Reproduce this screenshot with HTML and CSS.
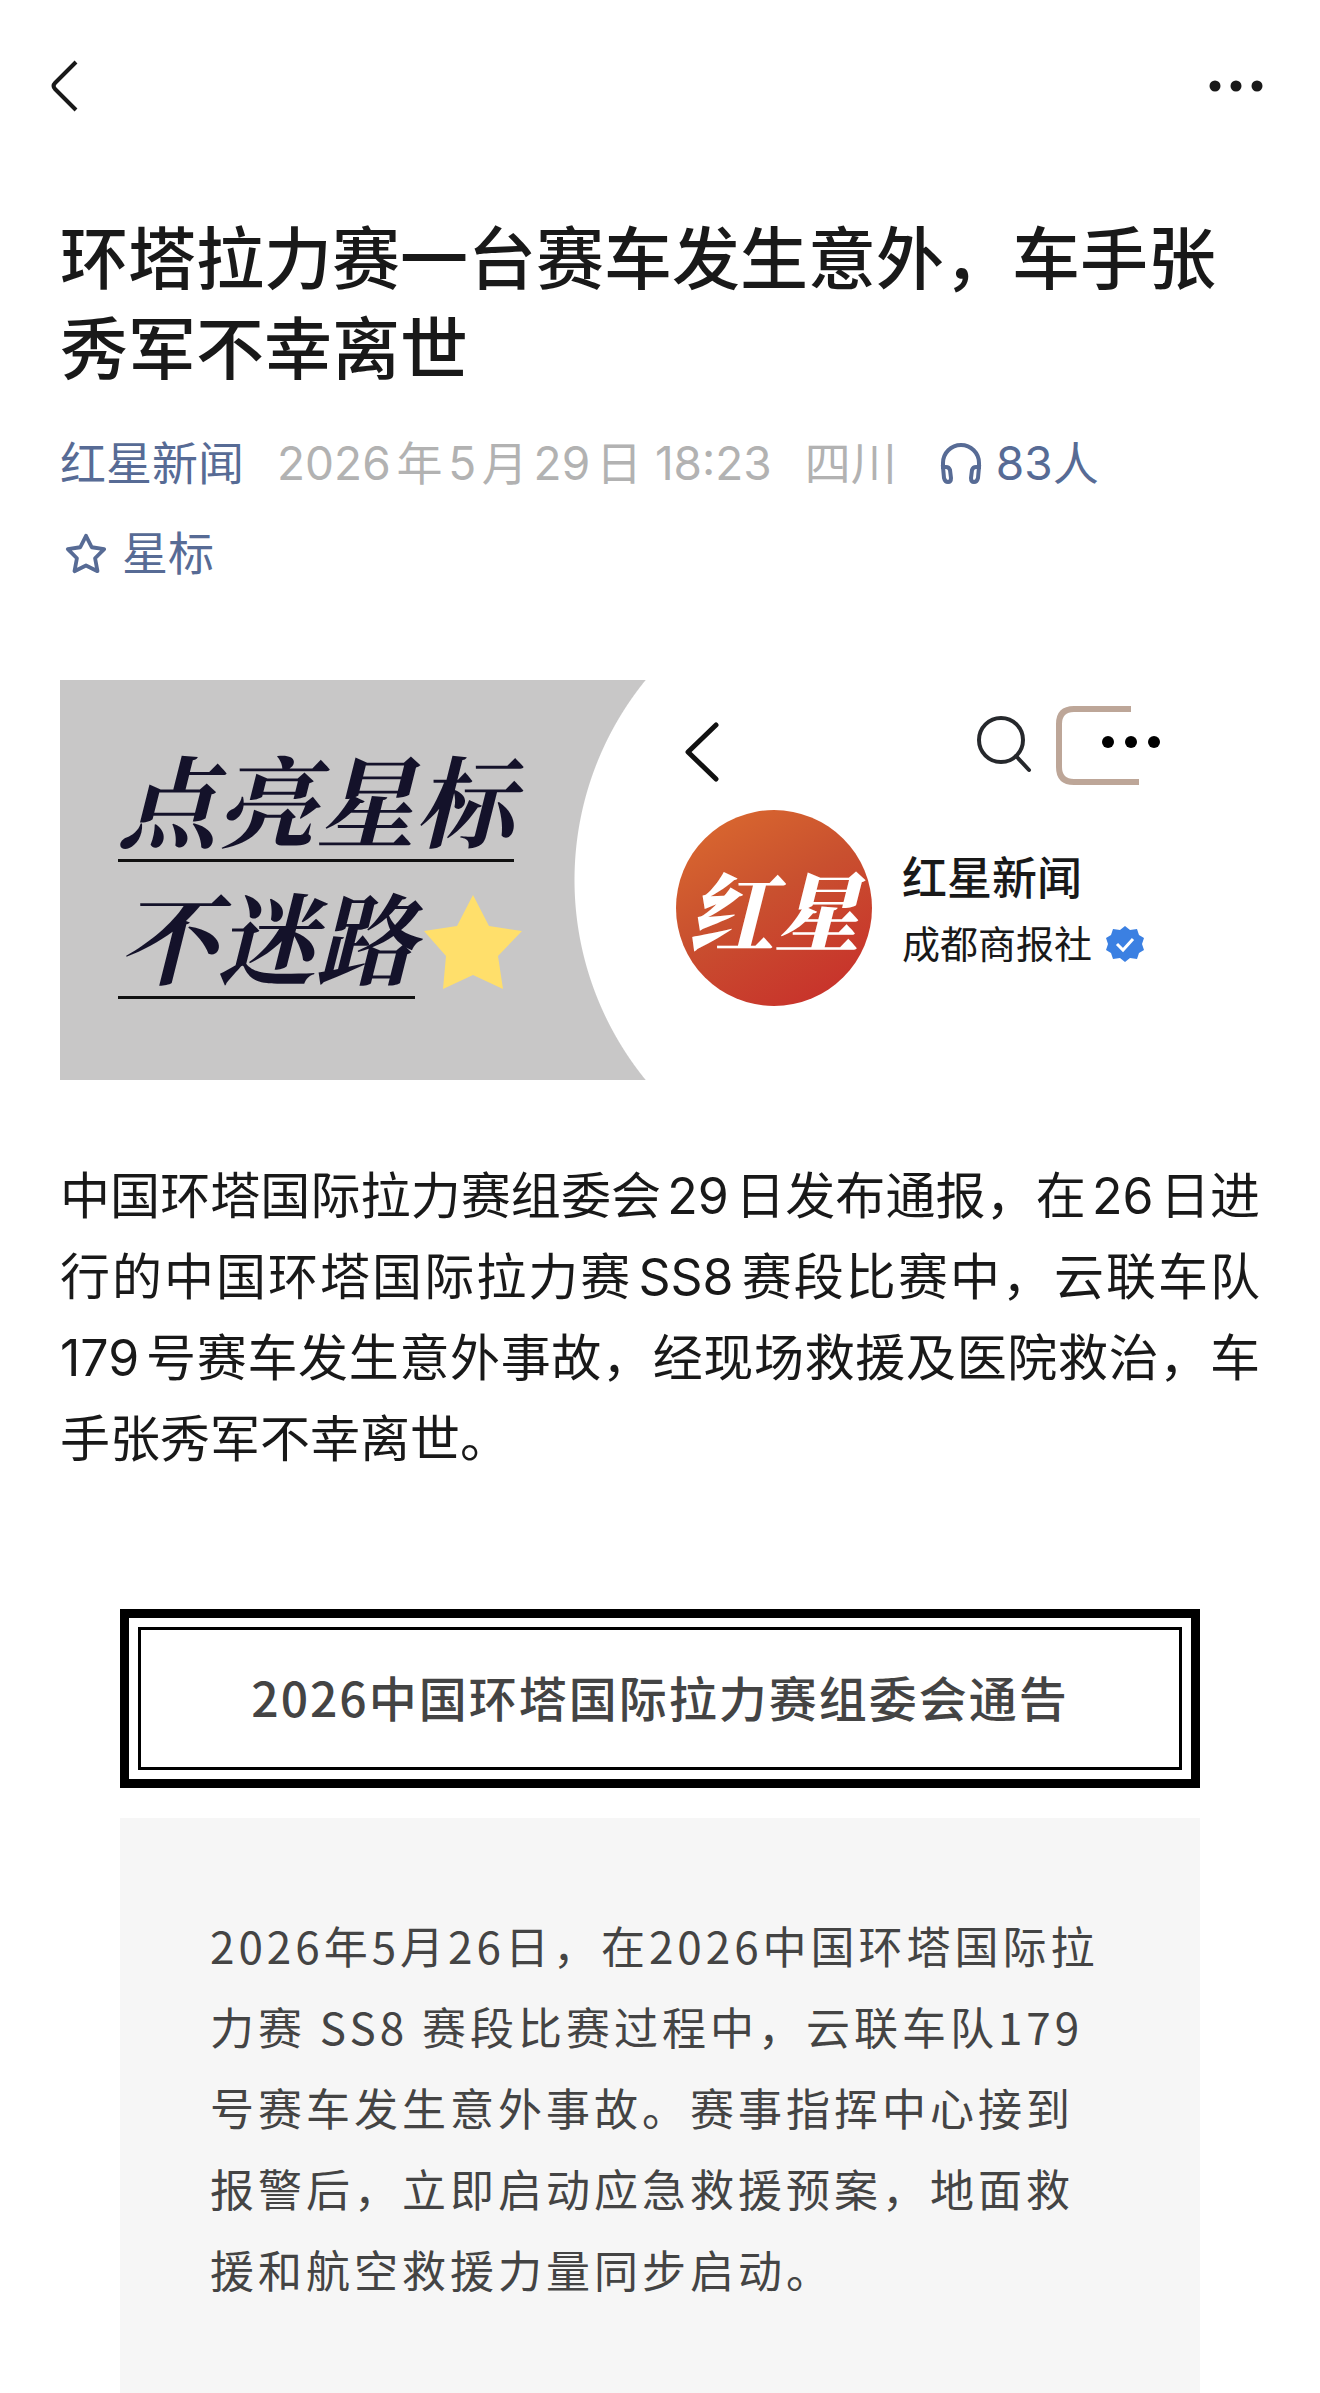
FILE: index.html
```html
<!DOCTYPE html>
<html lang="zh-CN">
<head>
  <meta charset="UTF-8">
  <title>环塔拉力赛一台赛车发生意外，车手张秀军不幸离世</title>
  <meta name="viewport" content="width=device-width,initial-scale=1">
  <link rel="stylesheet" href="styles.css">
</head>
<body>
  <header class="topbar">
    <button class="icon-btn" type="button" aria-label="返回">
      <svg width="30" height="56" viewBox="0 0 30 56"><path d="M26 4 5 25q-3 3 0 6L26 52" fill="none" stroke="#191919" stroke-width="4"/></svg>
    </button>
    <button class="icon-btn" type="button" aria-label="更多">
      <svg width="56" height="16" viewBox="0 0 56 16" fill="#191919"><circle cx="7" cy="8" r="5.500"/><circle cx="28" cy="8" r="5.500"/><circle cx="49" cy="8" r="5.500"/></svg>
    </button>
  </header>

  <main class="article">
    <h1 class="title">环塔拉力赛一台赛车发生意外，车手张秀军不幸离世</h1>

    <div class="meta">
      <a class="meta-link" href="#">红星新闻</a>
      <span>2026年5月29日 18:23</span>
      <span>四川</span>
      <button class="meta-btn listen" type="button">
        <svg width="42" height="42" viewBox="0 0 42 42" fill="none" stroke="#576b95" stroke-width="4">
          <path d="M3 27V21a18 18 0 0 1 36 0v6"/>
          <path d="M3 25h3q3 0 4 3l1 8q0 4-3 4-3 0-4-4z"/>
          <path d="M39 25h-3q-3 0-4 3l-1 8q0 4 3 4 3 0 4-4z"/>
        </svg>
        83人
      </button>
      <button class="meta-btn star" type="button">
        <svg width="44" height="44" viewBox="0 0 46 44" fill="none" stroke="#576b95" stroke-width="4" stroke-linejoin="round"><path d="M23 4l6 12 13 2-9.500 9.500L35 41l-12-6-12 6 2.500-13.500L4 18l13-2z"/></svg>
        星标
      </button>
    </div>

    <section class="banner">
      <div class="slogan">
        <p class="slogan-line"><span>点亮星标</span></p>
        <p class="slogan-line"><span>不迷路</span>
          <svg width="100" height="96" viewBox="0 0 100 96" fill="#ffdf6b"><path d="M50 1l16 31 33 5-24 25 5 33-30-14-30 14 3-33L1 37l33-5z"/></svg>
        </p>
      </div>
      <div class="card">
        <div class="card-bar">
          <svg class="back" width="36" height="60" viewBox="0 0 36 60" fill="none" stroke="#111" stroke-width="5" stroke-linecap="round" stroke-linejoin="round"><path d="M32 3 4 30l28 27"/></svg>
          <svg class="search" width="58" height="60" viewBox="0 0 58 60" fill="none" stroke="#26282c" stroke-width="4" stroke-linecap="round"><circle cx="27" cy="22" r="22" transform="translate(0 2)"/><path d="M42 40l13 14"/></svg>
          <svg width="108" height="80" viewBox="0 0 108 80"><path d="M75 3H18Q3 3 3 18v43q0 15 15 15h65" fill="none" stroke="#bda698" stroke-width="6"/><circle cx="52" cy="36" r="6"/><circle cx="75" cy="36" r="6"/><circle cx="98" cy="36" r="6"/></svg>
        </div>
        <div class="account">
          <div class="avatar">红星</div>
          <div class="account-info">
            <p class="account-name">红星新闻</p>
            <p class="account-org">成都商报社
              <svg width="38" height="38" viewBox="0 0 38 38"><path d="M19 1l5 4 7-1 2 6 5 3-2 6 2 6-5 3-2 6-7-1-5 4-5-4-7 1-2-6-5-3 2-6-2-6 5-3 2-6 7 1z" fill="#3b80e2"/><path d="M11 19l6 6 10-11" fill="none" stroke="#fff" stroke-width="3"/></svg>
            </p>
          </div>
        </div>
      </div>
    </section>

    <p class="lead">中国环塔国际拉力赛组委会29日发布通报，在26日进行的中国环塔国际拉力赛SS8赛段比赛中，云联车队179号赛车发生意外事故，经现场救援及医院救治，车手张秀军不幸离世。</p>

    <section class="notice">
      <div class="notice-frame"><h2 class="notice-title">2026中国环塔国际拉力赛组委会通告</h2></div>
      <div class="notice-body">
        <p>2026年5月26日，在2026中国环塔国际拉力赛 SS8 赛段比赛过程中，云联车队179号赛车发生意外事故。赛事指挥中心接到报警后，立即启动应急救援预案，地面救援和航空救援力量同步启动。</p>
      </div>
    </section>
  </main>
</body>
</html>
```
FILE: styles.css
```css
*{box-sizing:border-box}
body{margin:0;min-height:100vh;display:flex;flex-direction:column;background:#fff;color:#191919;
  font-family:Inter,"Noto Sans CJK SC",sans-serif}
h1,h2,p{margin:0}
button{padding:0;border:none;background:none;font:inherit;color:inherit;cursor:pointer}
svg{display:block;flex:none}

.topbar{display:flex;justify-content:space-between;align-items:center;height:172px;padding:0 56px 0 50px}

.article{flex:1;display:flex;flex-direction:column;padding:42px 60px 0}
.title{font-size:68px;line-height:90px;font-weight:500}

.meta{display:flex;flex-wrap:wrap;column-gap:33px;margin-top:24px;font-size:46px;line-height:90px;
  color:#b2b2b2;text-autospace:normal}
.meta-link{color:#576b95;text-decoration:none}
.meta-btn{display:flex;align-items:center;gap:14px;color:#576b95;line-height:90px;text-autospace:no-autospace}
.listen{margin-left:10px}
.star{flex-basis:100%;padding-left:4px}

/* баннер */
.banner{display:flex;height:400px;margin-top:82px}
.slogan{width:49%;padding:56px 0 0 58px;
  background:radial-gradient(circle 317px at 831px 50%,#fff 316px,#c8c7c7 317px);
  font-family:"Noto Serif CJK SC","Noto Sans CJK SC",serif;font-size:99px;line-height:100px;
  font-weight:700;font-style:italic;color:#14122a}
.slogan-line{display:flex;align-items:center;gap:8px;height:137px}
.slogan-line span{padding-bottom:12px;border-bottom:3px solid #111}
.card{flex:1;padding:26px 96px 0 28px}
.card-bar{display:flex;align-items:center;height:80px}
.back{margin:12px 0 0 8px}
.search{margin:0 24px 0 auto}
.account{display:flex;align-items:center;gap:30px;margin-top:24px}
.avatar{display:flex;align-items:center;justify-content:center;width:196px;height:196px;border-radius:50%;
  background:linear-gradient(150deg,#d8662f 10%,#c9502f 45%,#c8322b 90%);
  color:#fff;font-family:"Noto Serif CJK SC","Noto Sans CJK SC",serif;font-size:86px;font-weight:900;font-style:italic}
.account-info{padding-top:6px}
.account-name{font-size:45px;line-height:66px;font-weight:500}
.account-org{display:flex;align-items:center;gap:14px;font-size:38px;line-height:64px}

.lead{margin-top:76px;font-size:50px;line-height:81px;text-align:justify;text-autospace:normal}

/* notice */
.notice{flex:1;display:flex;flex-direction:column;margin:129px 60px 0;color:#444;
  font-family:"Noto Sans CJK SC",sans-serif}
.notice-frame{padding:9px;border:9px solid #000}
.notice-title{border:3px solid #000;padding:26px 0 30px;font-size:48px;line-height:81px;font-weight:500;
  letter-spacing:2px;text-align:center}
.notice-body{flex:1;margin-top:30px;padding:87px 90px 78px;background:#f6f6f6;font-size:44px;line-height:81px;
  letter-spacing:4px}
```
